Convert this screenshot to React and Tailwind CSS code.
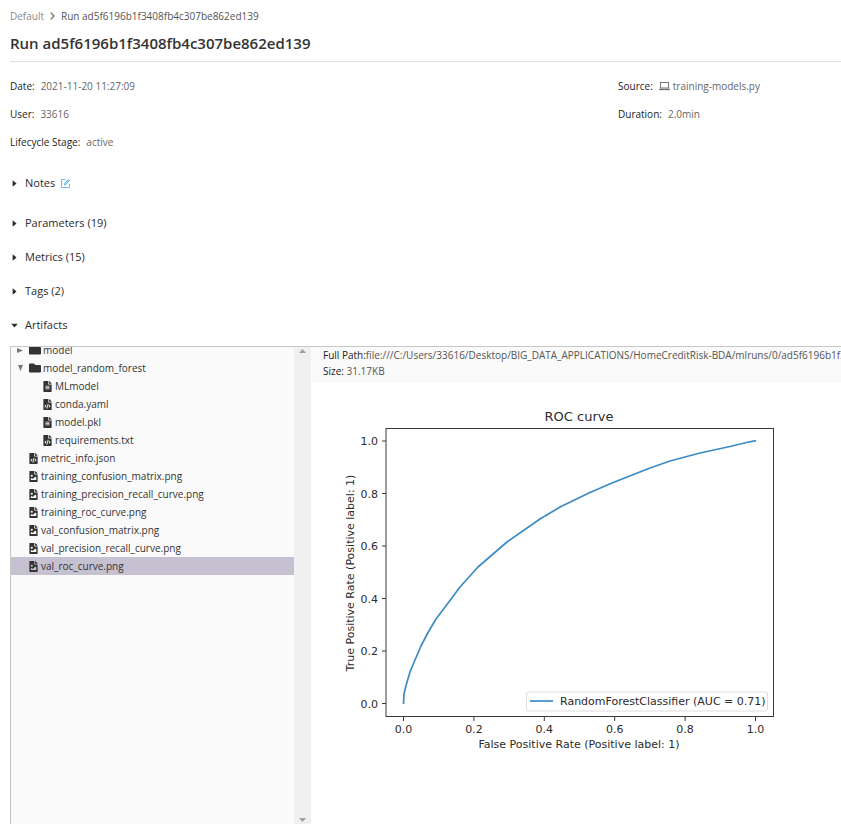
import { FaFileAlt, FaFileCode, FaFileImage, FaFolder } from "react-icons/fa";
import { AiFillCaretDown, AiFillCaretRight, AiOutlineForm } from "react-icons/ai";

const RUN_ID = "ad5f6196b1f3408fb4c307be862ed139";

const TREE = [
  { name: "model", kind: "folder", state: "closed" },
  { name: "model_random_forest", kind: "folder", state: "open" },
  { name: "MLmodel", kind: "text", nested: true },
  { name: "conda.yaml", kind: "code", nested: true },
  { name: "model.pkl", kind: "text", nested: true },
  { name: "requirements.txt", kind: "code", nested: true },
  { name: "metric_info.json", kind: "code" },
  { name: "training_confusion_matrix.png", kind: "image" },
  { name: "training_precision_recall_curve.png", kind: "image" },
  { name: "training_roc_curve.png", kind: "image" },
  { name: "val_confusion_matrix.png", kind: "image" },
  { name: "val_precision_recall_curve.png", kind: "image" },
  { name: "val_roc_curve.png", kind: "image", selected: true },
];

const FILE_ICONS = { text: FaFileAlt, code: FaFileCode, image: FaFileImage };

function Meta({ label, children }) {
  return (
    <div className="flex h-7 items-center gap-[6px] text-[10px] whitespace-nowrap">
      <dt className="text-[#222]">{label}:</dt>
      <dd className="flex items-center gap-[3px] text-[#666]">{children}</dd>
    </div>
  );
}

function Laptop() {
  return (
    <svg viewBox="0 0 11 10" className="h-[10px] w-[11px] fill-none stroke-[#777]" aria-hidden="true">
      <rect x="1.5" y="1.5" width="8" height="5.5" />
      <path d="M0 8.5h11" strokeWidth="1.4" />
    </svg>
  );
}

function Section({ title, open, children }) {
  const Caret = open ? AiFillCaretDown : AiFillCaretRight;
  return (
    <div className="flex h-[34px] items-center gap-[5px]">
      <button type="button" aria-expanded={Boolean(open)} className="flex items-center gap-[6px] text-[11px] text-[#2b2b2b]">
        <Caret className="size-[9px]" />
        {title}
      </button>
      {children}
    </div>
  );
}

function Arrow({ state }) {
  return (
    <svg viewBox="0 0 7 7" className="size-[7px] shrink-0 fill-[#777]" aria-hidden="true">
      {state === "open" ? <path d="M1 0h5L3.5 6z" /> : <path d="M0 1v5L6 3.5z" />}
    </svg>
  );
}

function TreeRow({ item }) {
  const color = item.selected ? "bg-[#c6c1d0]" : "";
  if (item.kind === "folder") {
    return (
      <button type="button" className="flex h-[18px] w-full items-center pl-[6px] text-left">
        <Arrow state={item.state} />
        <FaFolder className="mr-[2px] ml-[5px] size-[12px] shrink-0" />
        {item.name}
      </button>
    );
  }
  const Icon = FILE_ICONS[item.kind];
  return (
    <button
      type="button"
      className={`flex h-[18px] w-full items-center gap-[2px] text-left ${item.nested ? "pl-[31px]" : "pl-[17px]"} ${color}`}
    >
      <Icon className="size-[11px] shrink-0" />
      {item.name}
    </button>
  );
}

const CURVE =
  "80.5,320 81,310 83,301.5 87,288 92,276 98,262 105,248.5 113,235 124,220.5 137,203 155,183 184,158 217,135 238,122.5 267,108.5 289,99 327,84 347,77 377,69 407,62.5 423.5,58.5 433,56.7";
const TICKS = [0, 0.2, 0.4, 0.6, 0.8, 1];

function RocChart() {
  return (
    <svg width="500" height="375" viewBox="0 0 500 375" role="img" aria-label="ROC curve" className="font-['DejaVu_Sans',sans-serif] text-[11px]" fill="#2b2b2b">
      <text x="256" y="37" textAnchor="middle" className="text-[13px]">ROC curve</text>
      <rect x="63" y="44.5" width="387.5" height="288" fill="none" stroke="#3a3a3a" />
      {TICKS.map((t) => (
        <g key={t}>
          <path d={`M${80.5 + 352 * t} 333v4M63 ${319.5 - 262.5 * t}h-4`} stroke="#3a3a3a" />
          <text x={80.5 + 352 * t} y="349" textAnchor="middle">{t.toFixed(1)}</text>
          <text x="55" y={323.5 - 262.5 * t} textAnchor="end">{t.toFixed(1)}</text>
        </g>
      ))}
      <text x="256" y="364" textAnchor="middle">False Positive Rate (Positive label: 1)</text>
      <text transform="translate(31 189) rotate(-90)" textAnchor="middle">True Positive Rate (Positive label: 1)</text>
      <polyline points={CURVE} fill="none" stroke="#3b8bc4" strokeWidth="1.7" strokeLinejoin="round" />
      <rect x="203.5" y="308" width="241" height="19" rx="2" fill="#fff" stroke="#ddd" />
      <path d="M207 317h23" stroke="#3b8bc4" strokeWidth="1.7" />
      <text x="237" y="321">RandomForestClassifier (AUC = 0.71)</text>
    </svg>
  );
}

export default function App() {
  return (
    <main className="flex h-screen flex-col overflow-hidden bg-white pl-[10px] font-['Open_Sans','Noto_Sans',sans-serif] text-[#333]">
      <header className="border-b border-[#e0e0e0] pt-2">
        <nav aria-label="Breadcrumb" className="flex h-4 items-center gap-[6px] text-[10px] text-[#555]">
          <a href="#default" className="text-[#8a8a8a]">Default</a>
          <svg viewBox="0 0 5 8" className="h-2 w-[5px] fill-none stroke-[#666]" aria-hidden="true">
            <path d="M.7.7 4 4 .7 7.3" strokeWidth="1.2" />
          </svg>
          <span>Run {RUN_ID}</span>
        </nav>
        <h1 className="h-[37px] pt-[9px] text-[15px] leading-5 font-semibold">Run {RUN_ID}</h1>
      </header>

      <dl className="mt-[10px] grid grid-cols-[1fr_223px]">
        <Meta label="Date">2021-11-20 11:27:09</Meta>
        <Meta label="Source">
          <Laptop />
          training-models.py
        </Meta>
        <Meta label="User">33616</Meta>
        <Meta label="Duration">2.0min</Meta>
        <Meta label="Lifecycle Stage">active</Meta>
      </dl>

      <div className="mt-[10px] mb-[6px]">
        <Section title="Notes">
          <button type="button" aria-label="Edit notes" className="text-[#4a9ff5]">
            <AiOutlineForm className="size-[11px]" />
          </button>
        </Section>
      </div>
      <Section title="Parameters (19)" />
      <Section title="Metrics (15)" />
      <Section title="Tags (2)" />
      <Section title="Artifacts" open />

      <section className="mt-1 flex min-h-0 flex-1 border-t border-l border-[#c8c8c8]">
        <div className="flex w-[300px] shrink-0 bg-[#fafafa]">
          <div className="min-w-0 flex-1 overflow-hidden text-[10px]">
            <div className="-mt-[6px]">
              {TREE.map((item) => (
                <TreeRow key={item.name} item={item} />
              ))}
            </div>
          </div>
          <div className="flex w-[17px] flex-col items-center justify-between bg-[#f0f0f0] pt-[2px] pb-[2px]" aria-hidden="true">
            <svg viewBox="0 0 7 4" className="h-1 w-[7px] fill-[#a0a0a0]"><path d="M0 4h7L3.5 0z" /></svg>
            <svg viewBox="0 0 7 4" className="h-1 w-[7px] fill-[#a0a0a0]"><path d="M0 0h7L3.5 4z" /></svg>
          </div>
        </div>
        <div className="min-w-0 flex-1 overflow-hidden">
          <div className="h-[36px] bg-[#fafafa] pl-3 text-[10px] leading-4 whitespace-nowrap text-[#555]">
            <p><span className="text-[#222]">Full Path:</span>file:///C:/Users/33616/Desktop/BIG_DATA_APPLICATIONS/HomeCreditRisk-BDA/mlruns/0/{RUN_ID}/artifacts/val_roc_curve.png</p>
            <p><span className="text-[#222]">Size:</span> 31.17KB</p>
          </div>
          <div className="pt-px pl-3">
            <RocChart />
          </div>
        </div>
      </section>
    </main>
  );
}
